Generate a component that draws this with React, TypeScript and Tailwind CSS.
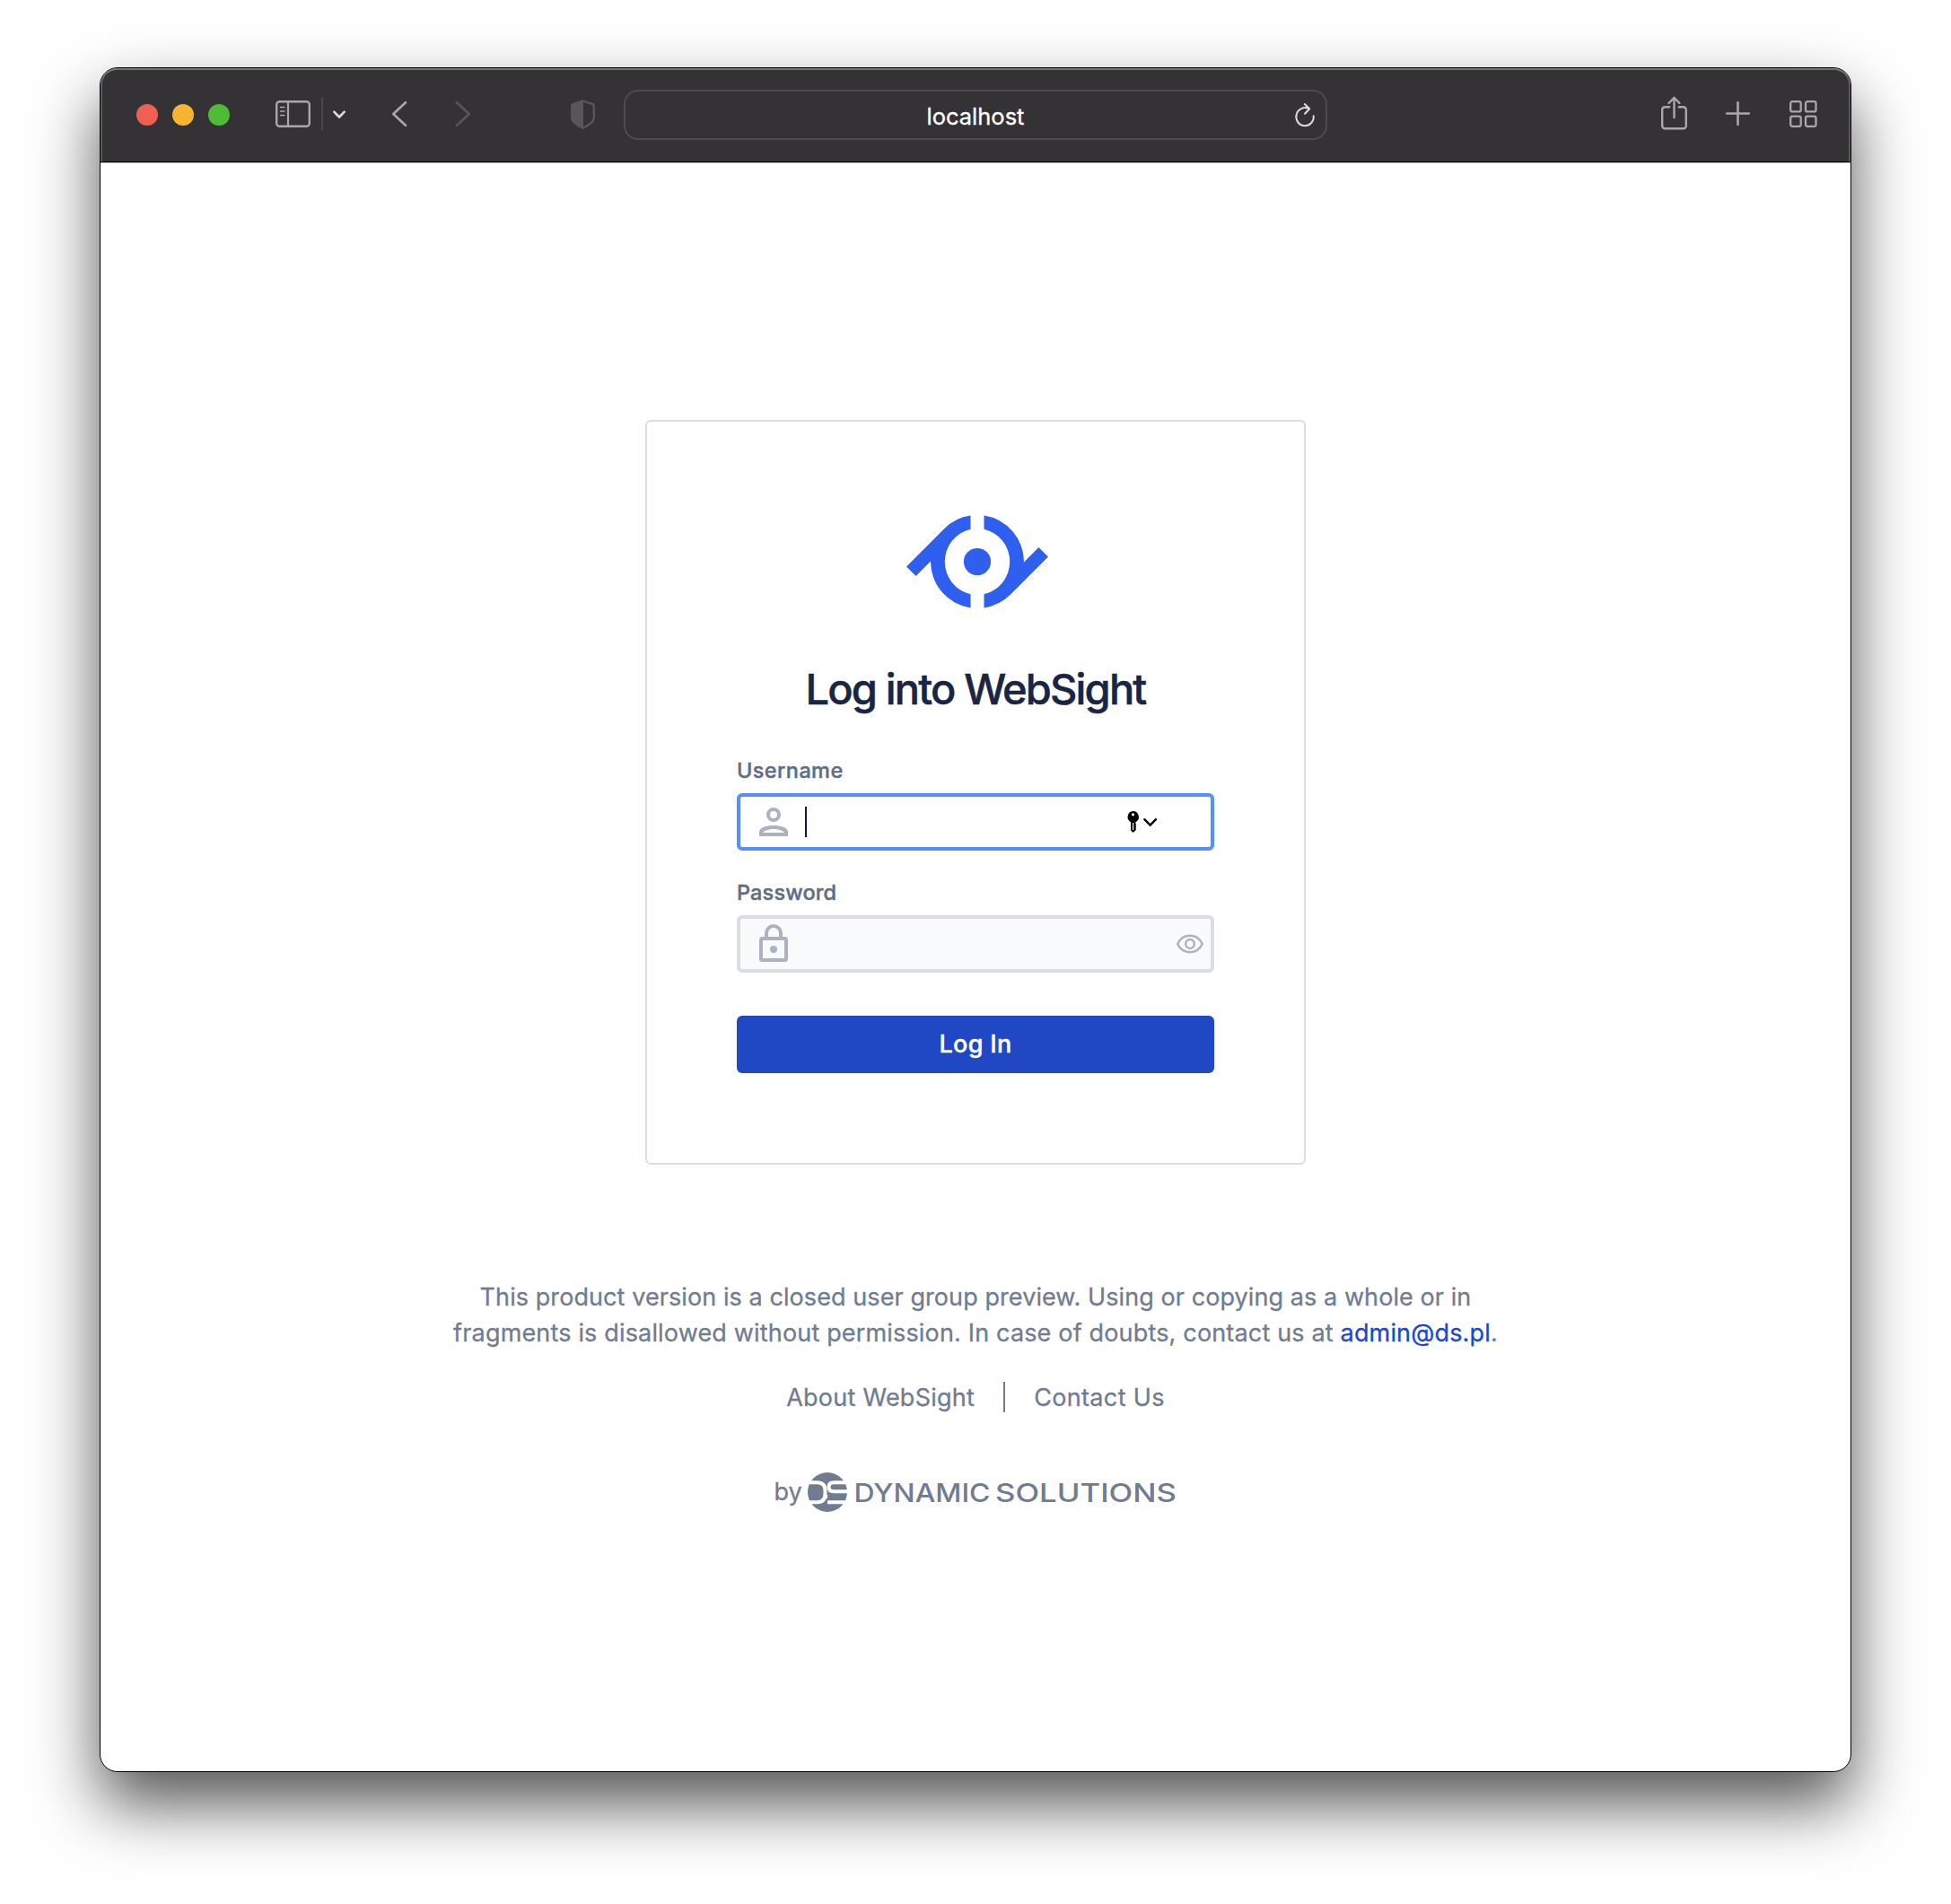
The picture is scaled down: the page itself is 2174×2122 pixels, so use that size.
function TrafficLights() {
  return (
    <div className="flex gap-4">
      <span className="size-6 rounded-full bg-[#ef6053]" />
      <span className="size-6 rounded-full bg-[#f6b530]" />
      <span className="size-6 rounded-full bg-[#4fbc38]" />
    </div>
  );
}

function Toolbar() {
  return (
    <header className="flex h-[105px] items-center rounded-t-[19px] border-b border-black bg-[#343235] pl-10 shadow-[inset_0_2px_0_#757377,inset_2px_0_0_#5a585b,inset_-2px_0_0_#5a585b]">
      <TrafficLights />
      <svg className="-mt-0.5 ml-[51px] h-[30px] w-[39px]" viewBox="0 0 39 30" fill="none" stroke="#a9a7aa">
        <rect x="1.2" y="1.2" width="36.6" height="27.6" rx="3.4" strokeWidth="2.4" />
        <path d="M14 1v28" strokeWidth="2.2" />
        <path d="M5.6 7.5h4.2M5.6 12h4.2M5.6 16.500h4.2" strokeWidth="1.700" strokeLinecap="round" />
      </svg>
      <span className="-mt-0.5 ml-3 h-9 w-0.5 bg-[#49474a]" />
      <svg className="-mt-px ml-[10px] h-3 w-4" viewBox="0 0 16 12" fill="none" stroke="#dddbde" strokeWidth="2.6" strokeLinecap="round" strokeLinejoin="round">
        <path d="M2.3 2.600 8 8.500l5.700-5.900" />
      </svg>
      <svg className="-mt-0.5 ml-[50px] h-[30px] w-[18px]" viewBox="0 0 18 30" fill="none" stroke="#a9a7aa" strokeWidth="2.6" strokeLinecap="round" strokeLinejoin="round">
        <path d="M16 2.200 2.300 15 16 27.800" />
      </svg>
      <svg className="-mt-0.5 ml-[53px] h-[30px] w-[18px]" viewBox="0 0 18 30" fill="none" stroke="#58565a" strokeWidth="2.6" strokeLinecap="round" strokeLinejoin="round">
        <path d="M2 2.200 15.700 15 2 27.800" />
      </svg>
      <svg className="-mt-px ml-[111px] h-[33px] w-[27px]" viewBox="0 0 27 33">
        <path d="M13.500 1.300 25 5.300c.6.300.8.600.8 1.200v14.300c0 4.600-6.400 7.900-12.300 10.900C7.600 28.700 1.200 25.400 1.200 20.800V6.500c0-.6.200-.9.800-1.200z" fill="none" stroke="#58565a" strokeWidth="2.400" />
        <path d="M14 .500 1.200 5v16.500c0 4 7 8 12.800 10.800z" fill="#58565a" />
      </svg>
      <div className="relative ml-8 flex h-14 w-[784px] items-center justify-center rounded-2xl border-2 border-[#4d4b4e] text-[25.5px] leading-8 text-white">
        <span className="mt-[3px] [-webkit-text-stroke:0.3px]">localhost</span>
        <svg className="absolute top-3 right-[11px] h-[28px] w-[24px]" viewBox="0 0 24 28" fill="none" stroke="#dddbde" strokeWidth="2" strokeLinecap="round" strokeLinejoin="round">
          <path d="M16.200 7.100A9.700 10 0 1 0 21.700 15.300M11.800 2l5.400 5.300-5.200 5.400" />
        </svg>
      </div>
      <svg className="-mt-[5px] ml-[371px] h-[38px] w-[31px]" viewBox="0 0 31 38" fill="none" stroke="#a9a7aa" strokeWidth="2.400" strokeLinecap="round" strokeLinejoin="round">
        <path d="M10.200 12.200H5.200a3 3 0 0 0-3 3v18a3 3 0 0 0 3 3h20.600a3 3 0 0 0 3-3v-18a3 3 0 0 0-3-3h-5M15.500 24V2M9.500 8l6-6.200 6 6.200" />
      </svg>
      <svg className="-mt-[3px] ml-[42px] size-[27px]" viewBox="0 0 27 27" stroke="#a9a7aa" strokeWidth="2.600" strokeLinecap="round">
        <path d="M13.500 1.200v24.600M1.200 13.500h24.600" />
      </svg>
      <svg className="-mt-[3px] ml-11 h-[30px] w-[31px]" viewBox="0 0 31 30" fill="none" stroke="#a9a7aa" strokeWidth="2.300">
        <rect x="1.200" y="1.200" width="11.500" height="11.200" rx="2" />
        <rect x="18" y="1.200" width="11.500" height="11.200" rx="2" />
        <rect x="1.200" y="17.600" width="11.500" height="11.200" rx="2" />
        <rect x="18" y="17.600" width="11.500" height="11.200" rx="2" />
      </svg>
    </header>
  );
}

function EyeLogo() {
  const half =
    "M-7.500-51.400A52 52 0 0 0-36.800-36.800L-79 5.400-68.400 16-52-.400A52 52 0 0 0-7.500 51.400V36.300A37.300 37.300 0 0 1-7.500-36.300Z";
  return (
    <svg className="ml-[3px] h-[104px] w-[160px]" viewBox="-80 -52 160 104" fill="#2f5fee">
      <path d={half} />
      <path d={half} transform="rotate(180)" />
      <circle r="15.100" />
    </svg>
  );
}

function LoginCard() {
  return (
    <main className="flex h-[830px] w-[736px] flex-col items-center rounded-md border-2 border-[#dcdde3] px-[100px] pt-[104px]">
      <EyeLogo />
      <h1 className="mt-[60px] text-[47px] leading-[60px] font-medium tracking-[-1.84px] whitespace-nowrap text-[#1a2545] [-webkit-text-stroke:0.5px]">
        Log into WebSight
      </h1>
      <form className="flex w-full flex-col items-start">
        <label className="mt-[45px] text-[23.5px] leading-8 font-medium tracking-[0.4px] text-[#626c84] [-webkit-text-stroke:0.4px]">Username</label>
        <div className="mt-[9px] flex h-16 w-full items-center rounded-md border-4 border-[#558ffc] bg-white pl-[13px]">
          <svg className="size-12" viewBox="0 0 24 24" fill="#acb2c0" fillRule="evenodd">
            <path d="M12 4a4 4 0 1 0 0 8 4 4 0 0 0 0-8m0 2a2 2 0 1 1 0 4 2 2 0 0 1 0-4M4 20v-2.500C4 15.200 8 14 12 14s8 1.200 8 3.500V20zm2-2h12c-.8-1.100-3.200-2-6-2s-5.200.9-6 2" />
          </svg>
          <span className="ml-[11px] h-[34px] w-0.5 bg-[#12183a]" />
          <svg className="ml-[357px] h-6 w-[34px]" viewBox="0 0 34 24">
            <path fillRule="evenodd" d="M6.500 0a6.500 6.500 0 0 1 2.800 12.300v1.200l.9 1-.9 1.200.9 1.300-.9 1.200.5 1V21L6.500 24 4 21.300v-9.100A6.500 6.500 0 0 1 6.500 0m0 2.200a1.600 1.600 0 1 0 0 3.200 1.600 1.600 0 0 0 0-3.200M6 13v8.300h1.200V13z" />
            <path d="M19.300 9.200 25.700 15.700 32 9.200" fill="none" stroke="#000" strokeWidth="2.400" strokeLinecap="round" strokeLinejoin="round" />
          </svg>
        </div>
        <label className="mt-[31px] text-[23.5px] leading-8 font-medium tracking-[0.15px] text-[#626c84] [-webkit-text-stroke:0.4px]">Password</label>
        <div className="mt-[9px] flex h-16 w-full items-center justify-between rounded-md border-4 border-[#dcdde3] bg-[#f9fafc] pr-[7px] pl-[13px]">
          <svg className="size-12" viewBox="0 0 24 24" fill="#acb2c0">
            <path d="M18.200 8H17V6A5 5 0 0 0 7 6v2H5.800A1.800 1.800 0 0 0 4 9.800v10.400A1.800 1.800 0 0 0 5.800 22h12.400a1.800 1.800 0 0 0 1.800-1.800V9.800A1.800 1.800 0 0 0 18.200 8M9 6a3 3 0 0 1 6 0v2H9zm9 14H6V10h12zm-6-3a2 2 0 1 0 0-4 2 2 0 0 0 0 4" />
          </svg>
          <svg className="-mt-px h-[22px] w-[32px]" viewBox="0 0 32 22" fill="none" stroke="#acb2c0" strokeWidth="2.500">
            <path d="M2.200 11C5 5.200 10 1.800 16 1.800S27 5.200 29.800 11C27 16.800 22 20.200 16 20.200S5 16.800 2.200 11z" strokeLinejoin="round" />
            <circle cx="16" cy="11" r="4.900" />
          </svg>
        </div>
        <button type="button" className="mt-12 h-16 w-full rounded-md bg-[#2048c4] text-[27px] leading-10 font-medium tracking-[0.3px] text-white [-webkit-text-stroke:0.4px]">
          Log In
        </button>
      </form>
    </main>
  );
}

function DynamicSolutions() {
  return (
    <svg className="ml-[6px] h-[44px] w-[412px]" viewBox="0 0 412 44" fill="#717c91">
      <circle cx="22" cy="22" r="22" />
      <g fill="none" stroke="#fff" strokeWidth="4">
        <path d="M0 11.200h10.500q9 0 9 9v3.500q0 9.500-9 9.500H0" />
        <path d="M44 11.200H29q-5.500 0-5.500 5t5.500 5h15" />
        <path d="M22 33.200h22M22 27h-4" />
      </g>
      <g fontFamily="Inter, sans-serif" fontSize="28.200" fontWeight="500">
        <text x="51.500" y="32.500" textLength="152" lengthAdjust="spacingAndGlyphs">DYNAMIC</text>
        <text x="209" y="32.500" textLength="202" lengthAdjust="spacingAndGlyphs">SOLUTIONS</text>
      </g>
    </svg>
  );
}

export default function App() {
  return (
    <div className="h-[2122px] w-[2174px] overflow-hidden bg-white pt-[75px] pl-[111px] font-['Inter',sans-serif]">
      <div className="flex h-[1900px] w-[1952px] flex-col rounded-[20px] border border-black bg-white shadow-[0_36px_72px_rgba(0,0,0,0.67)]">
        <Toolbar />
        <div className="flex flex-col items-center border-t border-[#c9c7ca] pt-[286px]">
          <LoginCard />
          <footer className="mt-32 flex flex-col items-center text-[27px] leading-10 whitespace-nowrap text-[#717c91] [-webkit-text-stroke:0.3px]">
            <p className="tracking-[0.08px]">This product version is a closed user group preview. Using or copying as a whole or in</p>
            <p className="tracking-[0.165px]">
              fragments is disallowed without permission. In case of doubts, contact us at{" "}
              <a className="text-[#2048c4]">admin@ds.pl</a>.
            </p>
            <div className="mt-8 flex">
              <a className="tracking-[0.25px]">About WebSight</a>
              <span className="mx-8 mt-0.5 h-[34px] w-0.5 bg-[#717c91]" />
              <a className="tracking-[0.35px]">Contact Us</a>
            </div>
            <div className="mt-[63px] flex items-center">
              <span>by</span>
              <DynamicSolutions />
            </div>
          </footer>
        </div>
      </div>
    </div>
  );
}
